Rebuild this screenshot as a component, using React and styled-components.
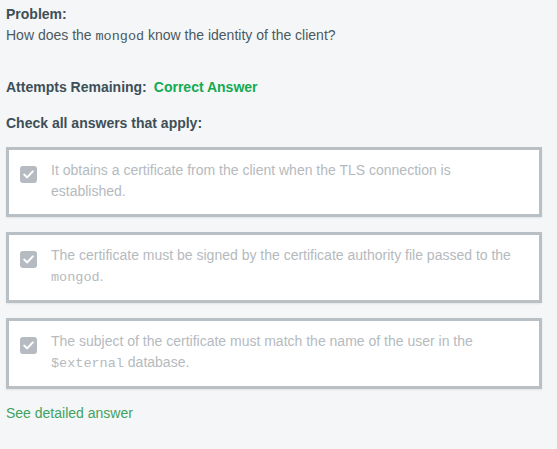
import React from "react";
import styled, { createGlobalStyle } from "styled-components";

const GlobalStyle = createGlobalStyle`
  html, body {
    margin: 0;
    background: #f5f6f7;
  }
  body {
    font-family: "Liberation Sans", Arial, sans-serif;
    color: #3d4f58;
  }
`;

const answers = [
  {
    id: 1,
    text: [
      "It obtains a certificate from the client when the TLS connection is established.",
    ],
  },
  {
    id: 2,
    text: [
      "The certificate must be signed by the certificate authority file passed to the ",
      { code: "mongod" },
      ".",
    ],
  },
  {
    id: 3,
    text: [
      "The subject of the certificate must match the name of the user in the ",
      { code: "$external" },
      " database.",
    ],
  },
];

const App = () => {
  return (
    <Page>
      <GlobalStyle />
      <Label>Problem:</Label>
      <Question>
        How does the <Code>mongod</Code> know the identity of the client?
      </Question>

      <Attempts>
        <Label>Attempts Remaining:</Label>
        <Status>Correct Answer</Status>
      </Attempts>

      <Label>Check all answers that apply:</Label>

      <List>
        {answers.map((a) => (
          <Card key={a.id}>
            <Box>
              <svg width="11" height="9" viewBox="0 0 11 9">
                <path
                  d="M1.2 4.6 L4.2 7.4 L9.8 1.4"
                  fill="none"
                  stroke="#fff"
                  strokeWidth="2"
                  strokeLinecap="round"
                  strokeLinejoin="round"
                />
              </svg>
            </Box>
            <AnswerText>
              {a.text.map((t, i) =>
                typeof t === "string" ? t : <Code key={i}>{t.code}</Code>
              )}
            </AnswerText>
          </Card>
        ))}
      </List>

      <Detail>See detailed answer</Detail>
    </Page>
  );
};

const Page = styled.div`
  width: 536px;
  padding: 4px 0 0 6px;
`;

const Label = styled.div`
  font-size: 14px;
  font-weight: bold;
  line-height: 21px;
  color: #3d4f58;
`;

const Question = styled.div`
  font-size: 14px;
  line-height: 21px;
  color: #4a5a62;
  margin-bottom: 30px;
`;

const Code = styled.span`
  font-family: "Liberation Mono", "DejaVu Sans Mono", monospace;
  font-size: 13.5px;
`;

const Attempts = styled.div`
  display: flex;
  align-items: baseline;
  gap: 7px;
  margin-bottom: 15px;
`;

const Status = styled.span`
  font-size: 14px;
  font-weight: bold;
  line-height: 21px;
  color: #13aa52;
`;

const List = styled.div`
  display: flex;
  flex-direction: column;
  gap: 15px;
  margin-top: 13px;
`;

const Card = styled.div`
  display: flex;
  align-items: flex-start;
  gap: 14px;
  background: #fff;
  border: 3px solid #b8c0c5;
  box-shadow: 0 1px 2px rgba(0, 0, 0, 0.08);
  padding: 10px 12px 12px 11px;
  min-height: 42px;
`;

const Box = styled.div`
  flex: none;
  width: 17px;
  height: 17px;
  margin-top: 6px;
  border-radius: 3px;
  background: #b5bbc0;
  display: flex;
  align-items: center;
  justify-content: center;
`;

const AnswerText = styled.div`
  font-size: 14px;
  line-height: 21px;
  color: #b5babe;
`;

const Detail = styled.div`
  margin-top: 14px;
  font-size: 14px;
  line-height: 21px;
  color: #3fa25f;
`;

export default App;
